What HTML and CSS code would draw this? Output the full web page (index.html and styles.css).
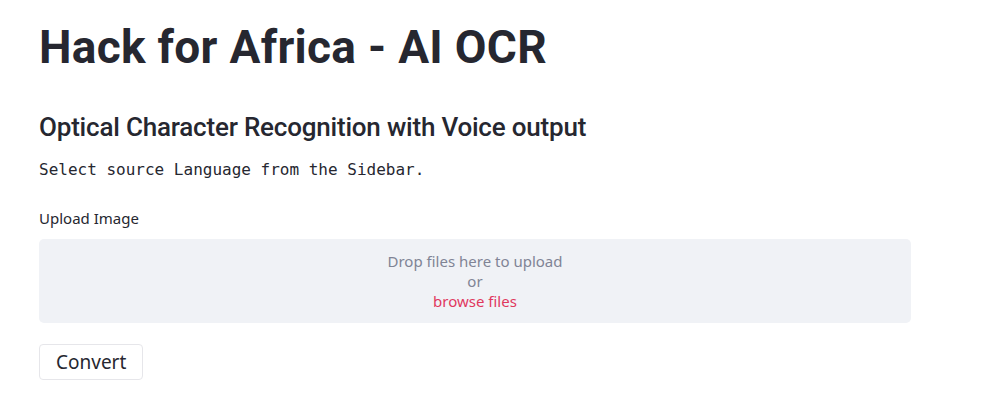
FILE: index.html
```html
<!DOCTYPE html>
<html>
<head>
<meta charset="utf-8">
<link rel="stylesheet" href="styles.css">
</head>
<body>
<main class="main">
  <h1 class="title">Hack for Africa - AI OCR</h1>
  <h3 class="subtitle">Optical Character Recognition with Voice output</h3>
  <p class="mono">Select source Language from the Sidebar.</p>
  <div class="label">Upload Image</div>
  <section class="dropzone">
    <div class="drop-line">Drop files here to upload</div>
    <div class="drop-line">or</div>
    <div class="drop-line link">browse files</div>
  </section>
  <button class="btn">Convert</button>
</main>
</body>
</html>
```
FILE: styles.css
```css
html, body {
  margin: 0;
  padding: 0;
  background: #ffffff;
}
body {
  font-family: "Noto Sans", "Open Sans", sans-serif;
  color: #262730;
}
.main {
  width: 872px;
  padding: 20px 0 0 39px;
  display: flex;
  flex-direction: column;
  align-items: flex-start;
}
.title {
  margin: 0;
  font-family: Roboto, sans-serif;
  font-size: 46px;
  line-height: 55px;
  font-weight: 700;
  letter-spacing: 0.3px;
}
.subtitle {
  margin: 33.5px 0 0;
  font-family: Roboto, sans-serif;
  font-size: 26px;
  line-height: 36px;
  font-weight: 500;
  letter-spacing: -0.2px;
}
.mono {
  margin: 13px 0 0;
  font-family: "DejaVu Sans Mono", monospace;
  font-size: 16px;
  line-height: 24px;
}
.label {
  margin-top: 26px;
  font-size: 15px;
  line-height: 20px;
}
.dropzone {
  margin-top: 11px;
  align-self: stretch;
  background: #f0f2f6;
  border-radius: 5px;
  padding: 12px 0;
  text-align: center;
  font-size: 15px;
  line-height: 20px;
  color: #808495;
}
.link {
  color: #e0385e;
}
.btn {
  margin-top: 21px;
  height: 36px;
  padding: 0 16px;
  background: #ffffff;
  border: 1px solid #e6e6ea;
  border-radius: 4px;
  font-family: "Noto Sans", sans-serif;
  font-size: 19px;
  color: #262730;
}
```
